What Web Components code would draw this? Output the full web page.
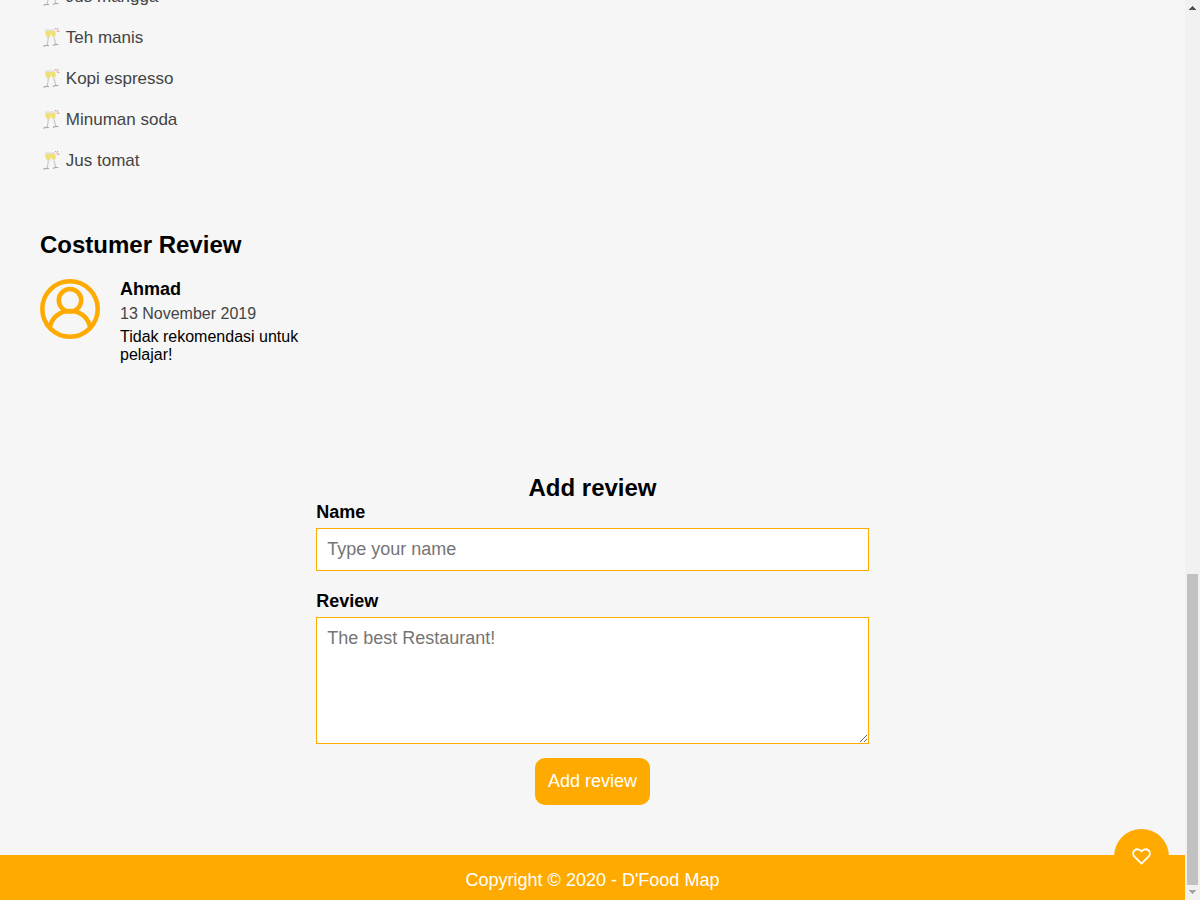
<!DOCTYPE html>
<html lang="id">
<head>
<meta charset="utf-8">
<title>D'Food Map</title>
<style>
html, body { margin: 0; height: 100%; overflow: hidden; }
body { background: #f6f6f6; font-family: "Liberation Sans", Arial, sans-serif; color: #000; }
</style>
</head>
<body>
<food-page>
  <drink-list>
    <drink-item>Jus mangga</drink-item>
    <drink-item>Teh manis</drink-item>
    <drink-item>Kopi espresso</drink-item>
    <drink-item>Minuman soda</drink-item>
    <drink-item>Jus tomat</drink-item>
  </drink-list>
  <review-section>
    <review-card name="Ahmad" date="13 November 2019">Tidak rekomendasi untuk pelajar!</review-card>
  </review-section>
  <review-form></review-form>
  <page-footer slot="footer">Copyright © 2020 - D'Food Map</page-footer>
  <like-button slot="floating"></like-button>
  <page-scrollbar slot="scrollbar"></page-scrollbar>
</food-page>
<script>
const define = (name, html, setup) => customElements.define(name, class extends HTMLElement {
  constructor() {
    super();
    this.attachShadow({ mode: 'open' }).innerHTML = html;
  }
  connectedCallback() { if (setup) setup(this, this.shadowRoot); }
});

define('food-page', `
<style>
:host { display: grid; grid-template-columns: minmax(0, 1fr) 15px; height: 900px; overflow: hidden; }
.view { position: relative; display: flex; flex-direction: column; overflow: hidden; }
main { flex: 1; min-height: 0; padding: 0 40px; }
</style>
<div class="view"><main><slot></slot></main><slot name="footer"></slot><slot name="floating"></slot></div>
<slot name="scrollbar"></slot>`);

define('drink-list', `
<style>:host { display: block; margin-top: -24px; }</style><slot></slot>`);

define('drink-item', `
<style>
:host { display: flex; align-items: center; height: 41px; font-size: 17px; line-height: 20px; color: #444; }
svg { flex: none; width: 20px; height: 20px; margin-right: 5.800px; }
</style>
<svg viewBox="0 0 20 20" fill="none">
<path d="M5.300 1 10.700 1.200C11.200 5 11 9.500 8.600 10.500 5.500 10 5 5 5.300 1Z" fill="#e4e4e2"/>
<path d="M10.400 1.200 15 .9C15.800 4.500 16 8.700 14 9.800 11.500 9.500 10.400 5 10.400 1.200Z" fill="#e4e4e2"/>
<path d="M5.400 3.500 10.700 2.700C11 6 10.600 9 8.500 9.600 6.300 9 5.500 6.500 5.400 3.500Z" fill="#f0e06e"/>
<path d="M10.700 2.700 15.200 3.200C15.700 6 15.500 8.300 14 9 12 8.500 11 5.500 10.700 2.700Z" fill="#f0e06e"/>
<path d="M8.300 10 7.200 17.500M14 9.500 15.800 16.500" stroke="#c9c9c9" stroke-width="1.200"/>
<path d="M3.300 18.300C5 17.500 7.500 17.100 9 17.800M12.900 17.400C14.500 16.500 17 16.200 18.400 16.700" stroke="#aaa" stroke-width="1.200"/>
<path d="m15.300.2 1 1.200M17.500.1l.3 1.200M16.700 2.700l1 .8M18.600 2.600l.4 1.200" stroke="#f05a5a" stroke-width=".9"/>
</svg><span><slot></slot></span>`);

define('review-section', `
<style>
:host { display: block; margin-top: 50px; height: 243px; }
h2 { margin: 0 0 21px; font-size: 24px; line-height: 27px; }
</style>
<h2>Costumer Review</h2><slot></slot>`);

define('review-card', `
<style>
:host { display: flex; gap: 20px; width: 270px; }
svg { width: 60px; height: 60px; flex: none; }
svg g { filter: blur(.4px); }
h3 { margin: 0; font-size: 18px; line-height: 20px; }
.date { margin: 6px 0 5px; font-size: 16px; line-height: 18px; color: #444; }
p { margin: 0; font-size: 16px; line-height: 18px; }
</style>
<svg viewBox="0 0 60 60" fill="none" stroke="#fa0" stroke-width="4.500"><g>
<circle cx="30" cy="30" r="27.700"/><circle cx="30" cy="21.300" r="11.200"/>
<path d="M9.500 49.500C11.500 39 19 32 30 32S48.500 39 50.500 49.500"/></g></svg>
<div><h3></h3><div class="date"></div><p><slot></slot></p></div>`, (host, root) => {
  root.querySelector('h3').textContent = host.getAttribute('name');
  root.querySelector('.date').textContent = host.getAttribute('date');
});

define('review-form', `
<style>
:host { display: block; width: 552.500px; margin: 0 auto; }
form { display: flex; flex-direction: column; }
h2 { margin: 0; font-size: 24px; line-height: 28px; text-align: center; }
label { font-size: 18px; font-weight: bold; line-height: 20px; margin-bottom: 6px; }
input, textarea { box-sizing: border-box; width: 100%; margin: 0; padding: 10px; border: 1px solid #fa0; border-radius: 0; background: #fff; font: 18px "Liberation Sans", Arial, sans-serif; outline: 0; }
input { height: 43px; margin-bottom: 20px; }
textarea { height: 127px; overflow: auto; }
button { align-self: center; width: 115px; height: 47px; margin-top: 14px; padding: 0; border: 0; border-radius: 10px; background: #fa0; color: #fff; font: 18px "Liberation Sans", Arial, sans-serif; }
</style>
<form><h2>Add review</h2>
<label for="name">Name</label><input id="name" placeholder="Type your name">
<label for="review">Review</label><textarea id="review" placeholder="The best Restaurant!"></textarea>
<button type="button">Add review</button></form>`);

define('page-footer', `
<style>
:host { display: flex; flex: none; align-items: center; justify-content: center; box-sizing: border-box; height: 45px; padding-top: 4px; background: #fa0; color: #fff; font-size: 18px; line-height: 20px; }
</style><span><slot></slot></span>`);

define('like-button', `
<style>
:host { position: absolute; right: 16px; bottom: 16px; display: block; width: 55px; height: 55px; }
button { display: flex; align-items: center; justify-content: center; width: 100%; height: 100%; padding: 0; border: 0; border-radius: 50%; background: #fa0; }
</style>
<button aria-label="like"><svg width="19" height="17" viewBox="0 0 19 17" fill="none" stroke="#fff" stroke-width="1.800" stroke-linejoin="round"><path d="M9.500 15.700 2.300 8.400C.7 6.700.7 4.100 2.400 2.500 4.500.5 7.500 1 9.500 3.400 11.500 1 14.500.5 16.600 2.500 18.300 4.100 18.300 6.700 16.700 8.400Z"/></svg></button>`);

define('page-scrollbar', `
<style>
:host { display: flex; flex-direction: column; background: #f1f1f1; }
svg { display: block; flex: none; width: 15px; height: 15px; }
.track { flex: 1; display: flex; flex-direction: column; justify-content: flex-end; padding: 0 2px; }
.thumb { height: 311px; background: #c1c1c1; }
</style>
<svg shape-rendering="crispEdges"><path fill="#505050" d="M7 6h1v1h1v1h1v1h1v1H4V9h1V8h1V7h1z"/></svg>
<div class="track"><div class="thumb"></div></div>
<svg shape-rendering="crispEdges"><path fill="#a3a3a3" d="M4 5h7v1h-1v1H9v1H8v1H7V8H6V7H5V6H4z"/></svg>`);
</script>
</body>
</html>
